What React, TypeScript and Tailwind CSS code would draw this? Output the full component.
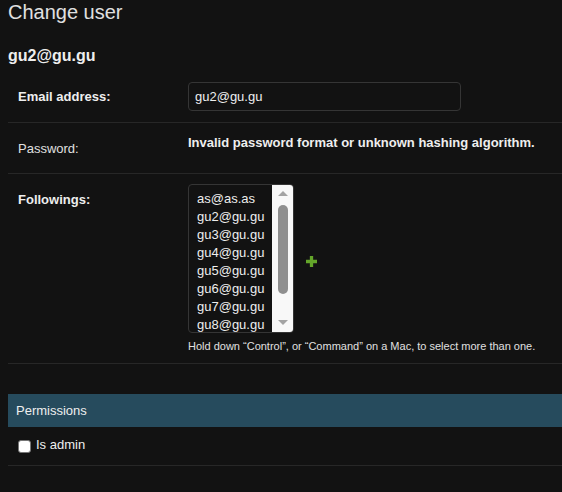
import React from "react";

const followings = [
  "as@as.as",
  "gu2@gu.gu",
  "gu3@gu.gu",
  "gu4@gu.gu",
  "gu5@gu.gu",
  "gu6@gu.gu",
  "gu7@gu.gu",
  "gu8@gu.gu",
];

function AddIcon() {
  return (
    <svg width="11" height="11" viewBox="0 0 10 10" className="mt-[6px] block">
      <path d="M3.5 0h3v3.5H10v3H6.5V10h-3V6.5H0v-3h3.5z" fill="#64a62a" />
    </svg>
  );
}

function MultiSelect() {
  return (
    <div className="flex h-[149px] w-[106px] overflow-hidden rounded-[4px] border border-[#353535] bg-[#121212]">
      <div className="flex-1 overflow-hidden pl-[8px] pt-[5px]">
        {followings.map((f) => (
          <div key={f} className="h-[18px] text-[13px] leading-[18px] whitespace-nowrap text-[#eeeeee]">
            {f}
          </div>
        ))}
      </div>
      {/* scrollbar */}
      <div className="flex w-[21px] flex-col items-center bg-[#f8f8f8] py-[4px]">
        <div className="mt-[2px] h-0 w-0 border-x-[5px] border-b-[5px] border-x-transparent border-b-[#a3a3a3]" />
        <div className="mt-[9px] h-[89px] w-[10px] rounded-full bg-[#8f8f8f]" />
        <div className="flex-1" />
        <div className="mb-[3px] h-0 w-0 border-x-[5px] border-t-[5px] border-x-transparent border-t-[#a3a3a3]" />
      </div>
    </div>
  );
}

export default function App() {
  return (
    <div
      className="min-h-[492px] w-full overflow-hidden bg-[#121212] pl-[8px] text-[#eeeeee]"
      style={{ fontFamily: '"Liberation Sans", Arial, sans-serif' }}
    >
      <h1 className="pt-[1px] text-[20px] leading-[22px] font-light text-[#e0e0e0]">Change user</h1>
      <h2 className="mt-[23px] text-[16px] leading-[20px] font-bold">gu2@gu.gu</h2>

      <div className="mt-[6px]">
        {/* Email */}
        <div className="flex border-b border-[#272727] px-[10px] pt-[10px] pb-[11px]">
          <label className="w-[170px] pt-[7px] text-[13px] leading-[16px] font-bold">Email address:</label>
          <div className="flex h-[29px] w-[273px] items-center rounded-[4px] border border-[#353535] bg-[#121212] px-[6px] text-[13px]">
            gu2@gu.gu
          </div>
        </div>

        {/* Password */}
        <div className="flex h-[51px] border-b border-[#272727] px-[10px] pt-[10px]">
          <label className="w-[170px] pt-[8px] text-[13px] leading-[16px] text-[#e0e0e0]">Password:</label>
          <div className="pt-[1px] text-[13px] leading-[18px] font-bold">
            Invalid password format or unknown hashing algorithm.
          </div>
        </div>

        {/* Followings */}
        <div className="flex border-b border-[#272727] px-[10px] pt-[10px] pb-[10px]">
          <label className="w-[170px] pt-[8px] text-[13px] leading-[16px] font-bold">Followings:</label>
          <div>
            <div className="flex items-center gap-[12px]">
              <MultiSelect />
              <AddIcon />
            </div>
            <div className="mt-[6px] text-[11px] leading-[14px] text-[#e0e0e0]">
              Hold down “Control”, or “Command” on a Mac, to select more than one.
            </div>
          </div>
        </div>
      </div>

      {/* Permissions */}
      <div className="mt-[30px]">
        <div className="flex h-[33px] items-center bg-[#264b5d] px-[8px] text-[13px]">
          <span className="text-[#eeeeee]">Permissions</span>
        </div>
        <div className="flex items-center border-b border-[#272727] px-[10px] pt-[9px] pb-[12px]">
          <span className="mt-[4px] h-[13px] w-[13px] rounded-[3px] border border-[#767676] bg-white" />
          <label className="ml-[5px] text-[13px] leading-[16px]">Is admin</label>
        </div>
      </div>
    </div>
  );
}
